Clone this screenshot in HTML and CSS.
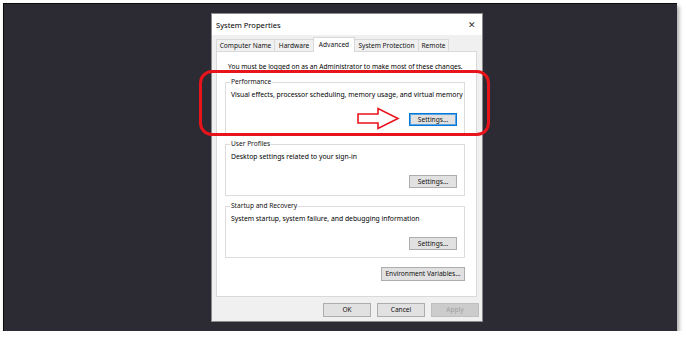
FILE: index.html
```html
<!DOCTYPE html>
<html lang="en">
<head>
    <meta charset="UTF-8"/>
    <title>System Properties - Advanced</title>
    <link rel="stylesheet" href="styles.css">
</head>
<body>
<div class="screen">
    <div class="dialog">
        <div class="titlebar">
            <span class="title">System Properties</span>
            <span class="close">&#x2715;</span>
        </div>

        <div class="tabs">
            <div class="tab tab-computer">Computer Name</div>
            <div class="tab tab-hardware">Hardware</div>
            <div class="tab tab-advanced active">Advanced</div>
            <div class="tab tab-protection">System Protection</div>
            <div class="tab tab-remote">Remote</div>
        </div>

        <div class="panel">
            <p class="notice">You must be logged on as an Administrator to make most of these changes.</p>

            <fieldset class="group">
                <legend>Performance</legend>
                <p class="group-text">Visual effects, processor scheduling, memory usage, and virtual memory</p>
                <div class="group-actions">
                    <button class="btn focused">Settings...</button>
                </div>
            </fieldset>

            <fieldset class="group">
                <legend>User Profiles</legend>
                <p class="group-text">Desktop settings related to your sign-in</p>
                <div class="group-actions">
                    <button class="btn">Settings...</button>
                </div>
            </fieldset>

            <fieldset class="group">
                <legend>Startup and Recovery</legend>
                <p class="group-text">System startup, system failure, and debugging information</p>
                <div class="group-actions">
                    <button class="btn">Settings...</button>
                </div>
            </fieldset>

            <div class="env-row">
                <button class="btn btn-wide">Environment Variables...</button>
            </div>
        </div>

        <div class="footer">
            <button class="btn">OK</button>
            <button class="btn">Cancel</button>
            <button class="btn" disabled>Apply</button>
        </div>
    </div>

    <!-- annotation drawn on top of the screenshot -->
    <div class="highlight"></div>
    <svg class="arrow" width="43" height="23" viewBox="0 0 43 23">
        <path d="M1 7 H21 V1.5 L41 11.5 L21 21.5 V16 H1 Z" fill="none" stroke="#e8141c" stroke-width="1.6" stroke-linejoin="miter"/>
    </svg>
</div>
</body>
</html>
```

FILE: styles.css
```css
/* Base */
body {
    margin: 0;
    background: #ffffff;
    font-family: "Noto Sans", "Open Sans", sans-serif;
    color: #000;
}

/* Dark desktop frame */
.screen {
    position: relative;
    box-sizing: border-box;
    margin: 3px 0 0 3px;
    width: 674px;
    height: 328px;
    padding: 9px 0 0 207px;
    background: #2c2a33;
    border-top: 1px solid #0b0b0d;
    border-left: 1px solid #0b0b0d;
    box-shadow: 2px 3px 4px rgba(0, 0, 0, 0.35);
}

/* Dialog window */
.dialog {
    box-sizing: border-box;
    width: 272px;
    height: 309px;
    background: #f0f0f0;
    border: 1px solid #8a8a8a;
    display: flex;
    flex-direction: column;
}

.titlebar {
    height: 21px;
    background: #ffffff;
    display: flex;
    align-items: center;
    justify-content: space-between;
    padding: 0 6px 0 4px;
}

.title {
    font-size: 7.6px;
}

.close {
    font-size: 9px;
    color: #333;
}

/* Tabs */
.tabs {
    display: flex;
    align-items: flex-end;
    height: 15px;
    margin-top: 1px;
    padding-left: 4px;
    position: relative;
    z-index: 1;
}

.tab {
    box-sizing: border-box;
    height: 12px;
    border: 1px solid #d9d9d9;
    border-bottom: none;
    border-right: none;
    background: #f0f0f0;
    font-size: 6.6px;
    line-height: 11px;
    text-align: center;
    color: #111;
}

.tab.active {
    height: 15px;
    margin-bottom: -1px;
    background: #ffffff;
    border-right: 1px solid #d9d9d9;
    line-height: 13px;
}

.tab-computer { width: 58px; }
.tab-hardware { width: 39px; }
.tab-advanced { width: 42px; }
.tab-protection { width: 63px; border-left: none; }
.tab-remote { width: 31px; border-right: 1px solid #d9d9d9; }

/* Tab page */
.panel {
    box-sizing: border-box;
    height: 246px;
    margin: 0 5px 0 4px;
    background: #ffffff;
    border: 1px solid #d9d9d9;
    padding: 9px 0 0 8px;
}

.notice {
    margin: 0 0 0 3px;
    font-size: 6.6px;
    line-height: 11px;
}

.group {
    box-sizing: border-box;
    width: 240px;
    min-width: 0;
    margin: 5px 0 0 0;
    padding: 0 7px 7px 5px;
    border: 1px solid #dcdcdc;
}

.group legend {
    padding: 0 1px;
    margin-left: -1px;
    font-size: 6.6px;
    line-height: 10px;
    color: #111;
}

.group-text {
    margin: 2px 0 0 0;
    font-size: 6.8px;
    line-height: 11px;
    white-space: nowrap;
}

.group-actions {
    display: flex;
    justify-content: flex-end;
    margin-top: 13px;
}

.env-row {
    width: 240px;
    display: flex;
    justify-content: flex-end;
    margin-top: 9px;
}

/* Buttons */
.btn {
    box-sizing: border-box;
    width: 48px;
    height: 14px;
    padding: 0;
    background: #e1e1e1;
    border: 1px solid #adadad;
    font-family: "Noto Sans", "Open Sans", sans-serif;
    font-size: 6.6px;
    line-height: 12px;
    color: #111;
}

.group .btn {
    height: 13px;
}

.btn.focused {
    border: 1px solid #0078d7;
    box-shadow: inset 0 0 0 1px #5aa2e0;
}

.btn-wide {
    width: 84px;
}

.btn:disabled {
    background: #cccccc;
    border-color: #bfbfbf;
    color: #a0a0a0;
}

.footer {
    display: flex;
    justify-content: flex-end;
    gap: 6px;
    margin-top: 6px;
    padding-right: 3px;
}

/* Red annotation over the dialog */
.highlight {
    position: absolute;
    left: 195px;
    top: 66px;
    width: 291px;
    height: 66px;
    box-sizing: border-box;
    border: 3px solid #e8141c;
    border-radius: 13px;
}

.arrow {
    position: absolute;
    left: 353px;
    top: 103px;
}
```
